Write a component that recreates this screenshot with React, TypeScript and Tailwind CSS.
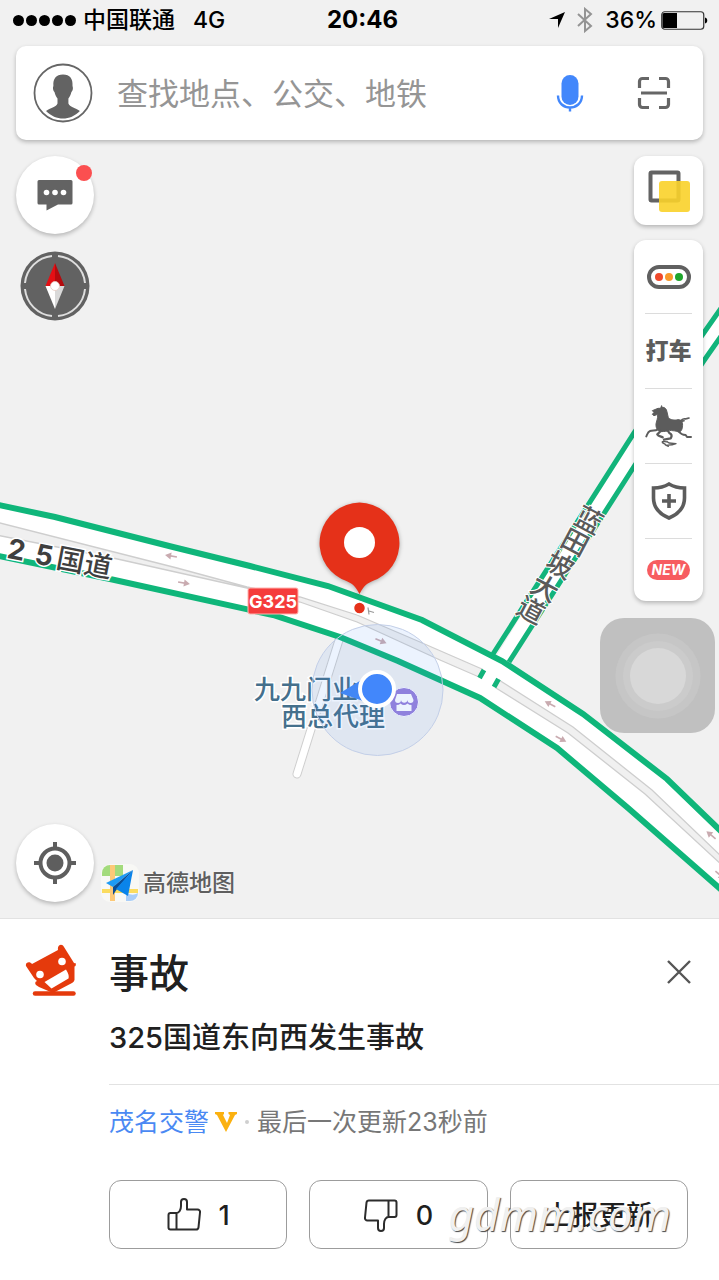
import { useState } from 'react';

const ROAD_UPPER = '-6,504 55,517 173,547 250,566 328,586 422,620 502,661 583,714 667,779 726,836';
const ROAD_LOWER = '726,894 628,808 557,748 480,698 398,661 340,637 273,615 110,579 -6,555';

const STREET_NAME = [
  { char: '蓝', x: 589, y: 520 },
  { char: '田', x: 575, y: 542 },
  { char: '坡', x: 560, y: 565 },
  { char: '大', x: 545, y: 588 },
  { char: '道', x: 531, y: 610 },
];

const ARROWS = [
  { x: 171, y: 556, angle: 190 },
  { x: 184, y: 583, angle: 10 },
  { x: 381, y: 641, angle: 22 },
  { x: 550, y: 704, angle: 208 },
  { x: 561, y: 739, angle: 28 },
  { x: 711, y: 835, angle: 220 },
  { x: 720, y: 875, angle: 40 },
];

function StatusBar() {
  return (
    <div className="grid h-10 grid-cols-3 items-center pl-[13px] pr-[11px] text-[23px] text-black">
      <div className="flex items-center whitespace-nowrap font-medium">
        <div className="mr-[7px] flex gap-[2px]">
          {[0, 1, 2, 3, 4].map((i) => (
            <span key={i} className="h-[11px] w-[11px] rounded-full bg-black" />
          ))}
        </div>
        <span>中国联通</span>
        <span className="ml-[18px]">4G</span>
      </div>
      <div className="pl-1 text-center text-2xl font-bold">20:46</div>
      <div className="flex items-center justify-end font-medium">
        <svg className="mr-3 h-4 w-4" viewBox="0 0 16 16">
          <path d="M16 0 9 16V7H0z" fill="#000" />
        </svg>
        <svg className="mr-3 h-[26px] w-4" viewBox="0 0 16 26" fill="none" stroke="#949494" strokeWidth="2">
          <path d="M1 7 14 19 8 24V2l6 5L1 19" />
        </svg>
        <span>36%</span>
        <svg className="ml-1 h-[19px] w-[47px]" viewBox="0 0 47 19">
          <rect x=".75" y=".75" width="42" height="17.5" rx="3" fill="none" stroke="#333" strokeWidth="1.2" />
          <path d="M3 2h13v15H3a1.5 1.5 0 0 1-1.5-1.5v-12A1.5 1.5 0 0 1 3 2z" fill="#000" />
          <path d="M44 6.500c3 .5 3 5.500 0 6z" fill="#000" />
        </svg>
      </div>
    </div>
  );
}

function SearchBar() {
  return (
    <form
      className="mx-4 mt-[6px] flex h-[94px] items-center rounded-[10px] bg-white pl-[17px] pr-8 shadow-[0_2px_4px_rgba(0,0,0,0.25)]"
      onSubmit={(e) => e.preventDefault()}
    >
      <button type="button" aria-label="我的" className="shrink-0">
        <svg className="h-[60px] w-[60px]" viewBox="0 0 60 60">
          <circle cx="30" cy="30" r="28.500" fill="#fff" stroke="#666" strokeWidth="1.8" />
          <path
            d="M30 11.500c7 0 10 4.500 9.500 11 0 1 .5 1.500.4 3-.1 1.800-.9 3-1.500 3.500-.6 3-1.800 5-3 6.500v5c1.600 3.500 6 4 11.500 7.500C42 53 36 55.500 30 55.500S18 53 13 48c5.500-3.500 10-4 11.500-7.500v-5c-1.200-1.500-2.400-3.500-3-6.500-.6-.5-1.400-1.700-1.500-3.500-.1-1.500.4-2 .4-3-.5-6.500 2.600-11 9.600-11z"
            fill="#636363"
          />
        </svg>
      </button>
      <input
        type="text"
        aria-label="搜索"
        placeholder="查找地点、公交、地铁"
        className="ml-6 min-w-0 flex-1 pt-[2px] text-[31px] outline-none placeholder:text-[#959595]"
      />
      <button type="button" aria-label="语音搜索" className="mr-[53px] shrink-0">
        <svg className="h-[38px] w-[28px]" viewBox="0 0 28 38">
          <rect x="5.500" y="1" width="17" height="30" rx="8.500" fill="#4287fb" />
          <path d="M2 21.500c0 16 24 16 24 0M14 33.500v4" fill="none" stroke="#4287fb" strokeWidth="2.400" />
        </svg>
      </button>
      <button type="button" aria-label="扫一扫" className="shrink-0">
        <svg className="h-[34px] w-[34px]" viewBox="0 0 34 34" fill="none" stroke="#666" strokeWidth="3.200">
          <path d="M12 2.500H5.500a3 3 0 0 0-3 3V12M22 2.500h6.500a3 3 0 0 1 3 3V12M12 31.500H5.500a3 3 0 0 1-3-3V22M22 31.500h6.500a3 3 0 0 0 3-3V22M4 17h26" />
        </svg>
      </button>
    </form>
  );
}

function MapCanvas() {
  return (
    <svg
      className="absolute inset-0 h-full w-full"
      viewBox="0 0 719 918"
      preserveAspectRatio="xMidYMid slice"
    >
      <path d="M494 660 634 433 703 334 740 279V310L703 362 635 465 510 664z" fill="#fff" />
      <g fill="none" stroke="#12b47b" strokeWidth="5">
        <path d="M493 654 634 433 703 334 740 281" />
        <path d="M509 662 635 465 703 362 740 309" />
      </g>

      <path d="M339 640 297 774" stroke="#cfcfcf" strokeWidth="9" strokeLinecap="round" />
      <path d="M339 640 297 774" stroke="#fff" strokeWidth="7" strokeLinecap="round" />

      <polygon points={`${ROAD_UPPER} ${ROAD_LOWER}`} fill="#fff" />
      <g fill="#f0f0f0" stroke="#cecece" strokeWidth="1.300">
        <path d="M-4 522 177 568 247 587 300 597 357 615 420 642 482 669 479 677 440 660 357 622 300 602 247 588 113 558-4 535z" />
        <path d="M499 680 573 727 652 790 724 859V867L645 794 568 733 496 688z" />
      </g>
      <path d="M484 670 479.500 678M498.500 679 494 687" stroke="#12b47b" strokeWidth="5" />
      <g fill="none" stroke="#0fb67a" strokeWidth="6">
        <polyline points={ROAD_UPPER} />
        <polyline points={ROAD_LOWER} />
      </g>

      {ARROWS.map((a) => (
        <g key={a.x} transform={`translate(${a.x} ${a.y}) rotate(${a.angle})`}>
          <path d="M-6 0H2" stroke="#c9abb0" strokeWidth="1.600" />
          <path d="M6 0 0-3.500V3.500z" fill="#c9abb0" />
        </g>
      ))}

      {/* road names */}
      <g fill="#3f3f3f" stroke="#fff" strokeWidth="3" paintOrder="stroke" fontWeight="500">
        <g transform="translate(7 558) rotate(11)" fontSize="28">
          <text x="-1" fontWeight="700">2</text>
          <text x="27" fontWeight="700">5</text>
          <text x="49">国道</text>
        </g>
        <g fontSize="27" fill="#5a5a5a" strokeWidth="2" textAnchor="middle">
          {STREET_NAME.map((s) => (
            <text key={s.char} y="10" transform={`translate(${s.x} ${s.y}) rotate(28)`}>
              {s.char}
            </text>
          ))}
        </g>
      </g>
      <rect x="248" y="588" width="50" height="26" rx="2" fill="#f53c3c" stroke="#ffb3b0" strokeWidth="1" />
      <text x="273" y="608" textAnchor="middle" fontSize="18" fontWeight="700" fill="#fff">
        G325
      </text>

      {/* shop */}
      <g fill="#45708c" stroke="#fff" strokeWidth="3" paintOrder="stroke" fontSize="26" fontWeight="500">
        <text x="254" y="699">九九门业</text>
        <text x="281" y="726">西总代理</text>
      </g>
      <circle cx="404" cy="702" r="14.500" fill="#9880db" stroke="#fff" strokeWidth="1" />
      <path d="M397 694h14l2.500 6a3 3 0 0 1-6 0 3.300 3.300 0 0 1-6.500 0 3 3 0 0 1-6 0z" fill="#fff" />
      <path d="M396.500 705q2.500 0 4-1.500 3.500 3 7 0 1.500 1.500 4 1.500v6h-15z" fill="#fff" />

      {/* current position */}
      <circle cx="377.500" cy="690" r="65.500" fill="#4285f4" fillOpacity=".1" stroke="#c3cfe8" strokeWidth="1" />
      <path d="M340 693 363 679V701z" fill="#4287f5" />
      <circle cx="377" cy="689" r="17" fill="#4287fb" stroke="#fff" strokeWidth="4" />

      {/* incident pin */}
      <g className="drop-shadow-[0_1px_2px_rgba(0,0,0,0.3)]">
        <path
          d="M359.500 502.500a40.500 40.500 0 0 1 18 76.500c-9 3.500-13 5-18 15-5-10-9-11.500-18-15a40.500 40.500 0 0 1 18-76.500z"
          fill="#e53119"
        />
      </g>
      <circle cx="359.500" cy="542.500" r="15.500" fill="#fff" />
      <path d="M368 607.500l1 7M369 611l5 1.500" stroke="#9a9a9a" strokeWidth="1.200" />
      <circle cx="359.500" cy="608" r="6" fill="#e53119" stroke="#fff" strokeWidth="1.500" />
    </svg>
  );
}

function Compass() {
  return (
    <svg className="h-[70px] w-[70px]" viewBox="0 0 70 70">
      <circle cx="35" cy="35" r="34.500" fill="#626262" />
      <g fill="none" stroke="#dedede" strokeWidth="2">
        <path d="M38 5A30 30 0 0 1 65 32M65 38A30 30 0 0 1 38 65M32 65A30 30 0 0 1 5 38M5 32A30 30 0 0 1 32 5" />
      </g>
      <path d="M35 12 25.500 35H35z" fill="#e40f14" />
      <path d="M35 12 44.500 35H35z" fill="#b50a0e" />
      <path d="M35 58 25.500 35H35z" fill="#fff" />
      <path d="M35 58 44.500 35H35z" fill="#d9d9d9" />
      <circle cx="35" cy="35" r="4.500" fill="#fff" stroke="#e6c9c0" strokeWidth=".8" />
    </svg>
  );
}

function Horse() {
  return (
    <svg className="h-[42px] w-[47px] shrink-0" viewBox="75 80 141 126" fill="none" stroke="#5c5c5c" strokeLinecap="round" strokeLinejoin="round">
      <path
        d="M125 83 126 87C134 86 140 92 141 101L145 118C153 126 164 126 174 124 184 123 190 132 187 146 187 153 183 160 177 162 171 157 155 157 148 156 141 160 132 159 123 160 112 158 107 148 108 137 109 129 114 121 113 108L102 112 97 108 102 102 97 97 114 90 121 90z"
        fill="#5c5c5c"
        strokeWidth="3"
      />
      <path d="M113 154C105 158 98 155 90 158 83 160 82 168 79 174" strokeWidth="6" />
      <path d="M122 158 112 168C116 175 121 173 128 177" strokeWidth="7" />
      <path d="M143 156 148 164C155 168 157 172 152 180L132 184" strokeWidth="7" />
      <path d="M176 158C181 166 188 170 197 170L201 176H213" strokeWidth="6" />
      <path d="M182 128C190 116 196 124 200 121L207 119M186 129 192 127" strokeWidth="5" />
      <path d="M127 190C134 188 137 192 141 190L147 194 168 196C158 200 147 201 136 200L145 204M127 193 136 198" strokeWidth="4" />
    </svg>
  );
}

function ToolPanel() {
  return (
    <div className="w-[69px] divide-y divide-[#dcdcdc] rounded-[12px] bg-white px-[11px] shadow-[0_2px_4px_rgba(0,0,0,0.25)]">
      <button type="button" aria-label="路况" className="flex h-[74px] w-full items-center justify-center">
        <svg className="h-6 w-[44px] shrink-0" viewBox="0 0 44 24">
          <rect x="2" y="2" width="40" height="20" rx="10" fill="#fff" stroke="#606060" strokeWidth="4" />
          <circle cx="12" cy="12" r="4" fill="#f04a2c" />
          <circle cx="22" cy="12" r="4" fill="#f9992b" />
          <circle cx="32" cy="12" r="4" fill="#1fa52c" />
        </svg>
      </button>
      <button
        type="button"
        className="flex h-[75px] w-full items-center justify-center whitespace-nowrap text-[23px] font-black text-[#5c5c5c]"
      >
        打车
      </button>
      <button type="button" aria-label="景点" className="flex h-[75px] w-full items-center justify-center">
        <Horse />
      </button>
      <button type="button" aria-label="安全" className="flex h-[75px] w-full items-center justify-center">
        <svg className="h-[38px] w-[36px]" viewBox="0 0 36 38" fill="none" stroke="#5c5c5c" strokeWidth="3.600">
          <path d="M18 2C13 5 8 6 2.500 6V16c0 9 6 16 15.500 20 9.500-4 15.500-11 15.500-20V6C28 6 23 5 18 2z" />
          <path d="M18 12v14M11 19h14" />
        </svg>
      </button>
      <button type="button" className="flex h-[62px] w-full items-center justify-center">
        <span className="rounded-full bg-[#f75c60] px-[5px] text-[14px] font-bold italic leading-5 text-white">NEW</span>
      </button>
    </div>
  );
}

function AmapLogo() {
  return (
    <div className="flex items-center">
      <svg className="h-[38px] w-[38px]" viewBox="0 0 38 38">
        <clipPath id="tile">
          <rect x="1" y="1" width="36" height="36" rx="8" />
        </clipPath>
        <rect width="38" height="38" rx="9" fill="#f8f8f5" />
        <g clipPath="url(#tile)">
          <path d="M1 1h21v11H1z" fill="#a3db7c" />
          <path d="M1 25h36v4H1z" fill="#fbdc5e" />
          <path d="M9 1h5v36H9z" fill="#fdc978" />
          <path d="M25 30c5 0 7 2 12-1v8H25z" fill="#a8cdf8" />
        </g>
        <path d="M32 6 5 19l7 4z" fill="#1d9bf5" />
        <path d="M32 6 12 23v8l4-6z" fill="#0b4d94" />
        <path d="M32 6 15 25l12 7z" fill="#0a84ea" />
      </svg>
      <span className="ml-1 text-[23px] font-medium text-[#5f5f5f] [text-shadow:0_0_2px_#fff]">高德地图</span>
    </div>
  );
}

function ThumbIcon({ className }: { className?: string }) {
  return (
    <svg
      className={`h-[34px] w-[34px] ${className ?? ''}`}
      viewBox="0 0 34 34"
      fill="none"
      stroke="#2c2c2c"
      strokeWidth="2"
      strokeLinejoin="round"
    >
      <path d="M9.500 15H3.500a2 2 0 0 0-2 2V29.500A2 2 0 0 0 3.500 31.500H29a2.500 2.500 0 0 0 2.500-2.200L33 14.500a2.500 2.500 0 0 0-2.500-3H20V4a3 3 0 0 0-6 0V8c0 4-2 7-4.500 7zM9.500 15V31.500" />
    </svg>
  );
}

function IncidentSheet() {
  const [vote, setVote] = useState<'up' | 'down' | null>(null);
  const buttonClass =
    'flex h-[69px] flex-1 items-center justify-center rounded-[12px] border border-[#9c9c9c] bg-white text-[27px] font-medium text-[#1f1f1f]';

  return (
    <section className="relative flex border-t border-[#e2e2e2] bg-white pb-[31px] pt-[25px]">
      <div className="w-[109px] shrink-0 pl-6">
        <svg className="h-[54px] w-[54px]" viewBox="0 0 54 54">
          <path
            d="M2 22C1 18 6 17 8 20L34 6C33 1 38-1 40 3L50 19 52 19.500Q52 22 50.500 22.500V36Q50 38 48 39L29 49 22 46 15 43 12 41Q10 38 13 37L10 34z"
            fill="#e53a0c"
          />
          <circle cx="38" cy="17.500" r="3.800" fill="#fff" />
          <circle cx="16" cy="30.500" r="3.800" fill="#fff" />
          <path d="M20.500 38 42 25.500Q45.500 31 44.500 34.500L27.500 44.500z" fill="#fff" />
          <path d="M11 49.500H49.500" stroke="#e53a0c" strokeWidth="4.500" strokeLinecap="round" />
        </svg>
      </div>

      <div className="min-w-0 flex-1">
        <div className="flex items-start justify-between pr-7">
          <h2 className="text-[40px] font-medium leading-[60px] text-[#202020]">事故</h2>
          <button type="button" aria-label="关闭" className="mt-4">
            <svg className="h-6 w-6" viewBox="0 0 24 24" stroke="#555" strokeWidth="2.400">
              <path d="M1 1 23 23M23 1 1 23" />
            </svg>
          </button>
        </div>
        <p className="mt-3 text-[29px] font-medium leading-[44px] text-[#202020]">325国道东向西发生事故</p>

        <div className="mt-6 flex items-center border-t border-[#e2e2e2] pt-[19px] text-[25px] leading-9">
          <a href="#source" className="text-[#4a89f3]">
            茂名交警
          </a>
          <svg className="ml-[6px] h-5 w-[22px]" viewBox="0 0 22 20">
            <path d="M0 0H9V2L8 3 12 11 15 3 13.500 2V0H22V2L20 3 11 20 2 3 0 2z" fill="#fbb110" />
          </svg>
          <span className="ml-2 h-1 w-1 rounded-full bg-[#cfcfcf]" />
          <span className="ml-2 text-[#777]">最后一次更新23秒前</span>
        </div>

        <div className="mt-10 flex gap-[22px] pr-[31px]">
          <button type="button" aria-label="有用" aria-pressed={vote === 'up'} onClick={() => setVote('up')} className={buttonClass}>
            <ThumbIcon />
            <span className="ml-[18px] pt-1">1</span>
          </button>
          <button type="button" aria-label="没用" aria-pressed={vote === 'down'} onClick={() => setVote('down')} className={buttonClass}>
            <ThumbIcon className="rotate-180" />
            <span className="ml-[18px] pt-1">0</span>
          </button>
          <button type="button" className={buttonClass}>
            <span className="pt-1">上报更新</span>
          </button>
        </div>
      </div>

      <span className="pointer-events-none absolute bottom-[38px] right-12 font-['Noto_Sans'] text-[44px] italic leading-[56px] text-[#f0f0f0] [text-shadow:1px_1px_1px_#444]">
        gdmm.com
      </span>
    </section>
  );
}

export default function App() {
  return (
    <div className="flex min-h-screen flex-col bg-[#f1f1f1] font-['Inter','Noto_Sans_CJK_SC',sans-serif]">
      <main className="relative flex flex-1 flex-col">
        <MapCanvas />

        <div className="relative flex flex-1 flex-col">
          <StatusBar />
          <SearchBar />

          <div className="mt-4 flex items-start justify-between px-4">
            <div className="flex flex-col items-center gap-[17px]">
              <button
                type="button"
                aria-label="消息"
                className="relative flex h-[78px] w-[78px] items-center justify-center rounded-full bg-white shadow-[0_2px_4px_rgba(0,0,0,0.25)]"
              >
                <svg className="h-[32px] w-[36px]" viewBox="0 0 36 32">
                  <path d="M2 1H34a1.500 1.500 0 0 1 1.500 1.500V24A1.500 1.500 0 0 1 34 25.500H21L9.500 31.500V25.500H2A1.500 1.500 0 0 1 .5 24V2.500A1.500 1.500 0 0 1 2 1z" fill="#636363" />
                  <circle cx="9.500" cy="13.500" r="2.800" fill="#fff" />
                  <circle cx="18" cy="13.500" r="2.800" fill="#fff" />
                  <circle cx="26.500" cy="13.500" r="2.800" fill="#fff" />
                </svg>
                <span className="absolute right-[2px] top-[9px] h-4 w-4 rounded-full bg-[#fb4f50]" />
              </button>
              <button type="button" aria-label="指南针" className="rounded-full">
                <Compass />
              </button>
            </div>

            <div className="flex flex-col gap-[15px]">
              <button
                type="button"
                aria-label="图层"
                className="flex h-[69px] w-[69px] items-center justify-center rounded-[12px] bg-white shadow-[0_2px_4px_rgba(0,0,0,0.25)]"
              >
                <svg className="h-[42px] w-[42px]" viewBox="0 0 42 42">
                  <rect x="2.500" y="2.500" width="28" height="28" rx="1" fill="none" stroke="#636363" strokeWidth="4" />
                  <rect x="11" y="11" width="31" height="31" rx="3" fill="#fad12a" fillOpacity=".9" />
                </svg>
              </button>
              <ToolPanel />
            </div>
          </div>

          <div className="mt-auto flex items-end gap-[7px] px-4 pb-4">
            <button
              type="button"
              aria-label="定位"
              className="flex h-[78px] w-[78px] items-center justify-center rounded-full bg-white shadow-[0_2px_4px_rgba(0,0,0,0.25)]"
            >
              <svg className="h-[42px] w-[42px]" viewBox="0 0 42 42" stroke="#5e5e5e" strokeWidth="4">
                <circle cx="21" cy="21" r="14.500" fill="none" />
                <circle cx="21" cy="21" r="8.500" fill="#5e5e5e" strokeWidth="0" />
                <path d="M21 0v6M21 36v6M0 21h6M36 21h6" />
              </svg>
            </button>
            <AmapLogo />
          </div>
        </div>

        <button
          type="button"
          aria-label="辅助触控"
          className="absolute right-1 top-[618px] flex h-[115px] w-[115px] items-center justify-center rounded-[24px] bg-[#c0c0c0]"
        >
          <svg className="h-[86px] w-[86px]" viewBox="0 0 86 86">
            <circle cx="43" cy="43" r="42.500" fill="#c6c6c6" />
            <circle cx="43" cy="43" r="35" fill="#cbcbcb" />
            <circle cx="43" cy="43" r="28" fill="#d8d8d8" />
          </svg>
        </button>
      </main>

      <IncidentSheet />
    </div>
  );
}
